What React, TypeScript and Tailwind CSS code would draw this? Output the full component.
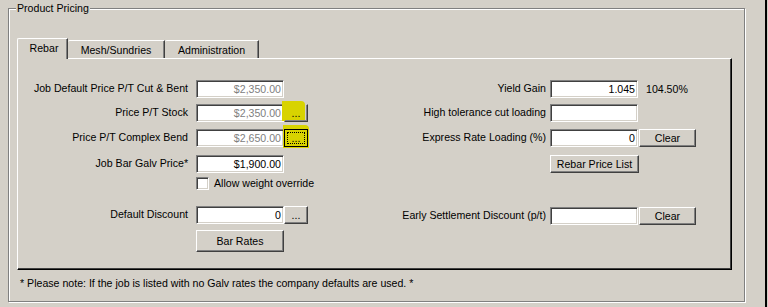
import React from "react";

const sunken =
  "border border-t-[#808080] border-l-[#808080] border-b-white border-r-white shadow-[inset_1px_1px_0_#404040,inset_-1px_-1px_0_#d4d0c8]";
const raised =
  "border border-t-white border-l-white border-b-[#404040] border-r-[#404040] shadow-[inset_-1px_-1px_0_#808080] bg-[#d4d0c8]";

function Input({ value, disabled, w = "w-[88px]" }: { value: string; disabled?: boolean; w?: string }) {
  return (
    <div
      className={`${sunken} ${w} h-[18px] bg-white flex items-center justify-end pr-[2px] leading-none ${
        disabled ? "text-[#808080]" : "text-black"
      }`}
    >
      {value}
    </div>
  );
}

function Btn({ label, w, h = "h-[18px]" }: { label: string; w: string; h?: string }) {
  return (
    <div className={`${raised} ${w} ${h} flex items-center justify-center leading-none`}>{label}</div>
  );
}

function LRow({ label, children, className = "" }: { label: React.ReactNode; children: React.ReactNode; className?: string }) {
  return (
    <div className={`flex items-center h-[18px] ${className}`}>
      <div className="w-[170px] text-right whitespace-nowrap">{label}</div>
      <div className="ml-[8px] flex items-center">{children}</div>
    </div>
  );
}

function RRow({ label, children, className = "" }: { label: React.ReactNode; children: React.ReactNode; className?: string }) {
  return (
    <div className={`flex items-center h-[18px] ${className}`}>
      <div className="w-[166px] text-right whitespace-nowrap">{label}</div>
      <div className="ml-[4px] flex items-center">{children}</div>
    </div>
  );
}

export default function App() {
  return (
    <div className="w-[768px] h-[307px] bg-[#d4d0c8] flex overflow-hidden text-[10.6px] text-black font-['Liberation_Sans',Arial,sans-serif]">
      <div className="w-[765px] pl-[8px] pt-[8px]">
        {/* group box */}
        <div className="relative w-[737px] h-[294px] border border-[#808080] shadow-[inset_1px_1px_0_#ffffff,1px_1px_0_#ffffff] pl-[8px] pt-[29px]">
          <div className="absolute left-[7px] -top-[8px] px-[1px] bg-[#d4d0c8] leading-[14px]">Product Pricing</div>

          {/* tabs */}
          <div className="flex items-end h-[20px]">
            <div className="relative z-10 w-[51px] h-[21px] -mb-[1px] bg-[#d4d0c8] border-t border-l border-t-white border-l-white border-r border-r-[#404040] shadow-[inset_-1px_0_0_#808080] rounded-tl-[2px] flex justify-center pt-[3px] pl-[3px] leading-[13px]">
              Rebar
            </div>
            <div className="w-[97px] h-[18px] border-t border-t-white border-r border-r-[#404040] shadow-[inset_-1px_0_0_#808080] rounded-tl-[2px] flex justify-center pt-[3px] leading-[13px]">
              Mesh/Sundries
            </div>
            <div className="w-[94px] h-[18px] border-t border-t-white border-r border-r-[#404040] shadow-[inset_-1px_0_0_#808080] rounded-tl-[2px] flex justify-center pt-[3px] leading-[13px]">
              Administration
            </div>
          </div>

          {/* panel */}
          <div className="w-[715px] h-[212px] border border-t-white border-l-white border-r-black border-b-black shadow-[inset_-1px_-1px_0_#404040] flex pt-[21px]">
            {/* left column */}
            <div className="w-[362px] flex flex-col">
              <LRow label="Job Default Price P/T Cut & Bent">
                <Input value="$2,350.00" disabled />
              </LRow>
              <LRow label="Price P/T Stock" className="mt-[6px]">
                <Input value="$2,350.00" disabled />
                <div className="relative">
                  <div className="absolute -left-[2px] -top-[3px] w-[23px] h-[20px] bg-[#d8d300] rounded-tr-[4px]" />
                  <div className="relative w-[24px] h-[18px] border border-b-[#404040] border-r-[#404040] border-t-transparent border-l-transparent shadow-[inset_-1px_-1px_0_#808080] flex items-center justify-center leading-none">
                    ...
                  </div>
                </div>
              </LRow>
              <LRow label="Price P/T Complex Bend" className="mt-[7px]">
                <Input value="$2,650.00" disabled />
                <div className="relative">
                  <div className="absolute -left-[1px] -top-[4px] w-[26px] h-[23px] bg-[#d8d300] rounded-tr-[4px]" />
                  <div className="relative w-[24px] h-[18px] border border-black bg-[#d8d300] flex items-center justify-center p-[2px]">
                    <div className="w-full h-full border border-dotted border-black flex items-center justify-center leading-none">
                      ...
                    </div>
                  </div>
                </div>
              </LRow>
              <LRow label={<span>Job Bar Galv Price*</span>} className="mt-[8px]">
                <Input value="$1,900.00" />
              </LRow>
              <div className="flex items-center h-[13px] mt-[4px] pl-[178px]">
                <div className={`${sunken} w-[13px] h-[13px] bg-white`} />
                <span className="ml-[5px] leading-none">Allow weight override</span>
              </div>
              <LRow label="Default Discount" className="mt-[16px]">
                <Input value="0" />
                <Btn label="..." w="w-[24px]" />
              </LRow>
              <div className="mt-[6px] pl-[178px]">
                <Btn label="Bar Rates" w="w-[88px]" h="h-[22px]" />
              </div>
            </div>

            {/* right column */}
            <div className="flex flex-col">
              <RRow label="Yield Gain">
                <Input value="1.045" />
                <span className="ml-[8px] leading-none">104.50%</span>
              </RRow>
              <RRow label="High tolerance cut loading" className="mt-[6px]">
                <Input value="" />
              </RRow>
              <RRow label="Express Rate Loading (%)" className="mt-[7px]">
                <Input value="0" />
                <div className="ml-[1px]">
                  <Btn label="Clear" w="w-[57px]" />
                </div>
              </RRow>
              <RRow label="" className="mt-[8px]">
                <Btn label="Rebar Price List" w="w-[89px]" />
              </RRow>
              <RRow label="Early Settlement Discount (p/t)" className="mt-[34px]">
                <Input value="" />
                <div className="ml-[1px]">
                  <Btn label="Clear" w="w-[57px]" />
                </div>
              </RRow>
            </div>
          </div>

          <div className="mt-[7px] ml-[3px] leading-[13px]">
            * Please note: If the job is listed with no Galv rates the company defaults are used. *
          </div>
        </div>
      </div>
      <div className="w-[2px] h-full bg-black" />
      <div className="flex-1" />
    </div>
  );
}
